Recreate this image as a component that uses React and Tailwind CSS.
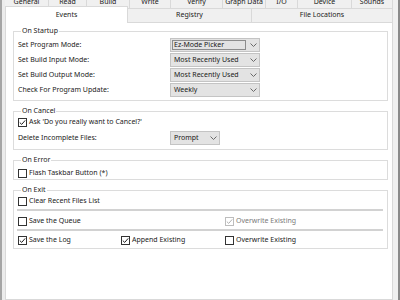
import React from "react";

const topTabs = [
  { label: "General", w: "w-[44px]" },
  { label: "Read", w: "w-[38px]" },
  { label: "Build", w: "w-[43px]" },
  { label: "Write", w: "w-[41px]" },
  { label: "Verify", w: "w-[52px]" },
  { label: "Graph Data", w: "w-[43px]" },
  { label: "I/O", w: "w-[32px]" },
  { label: "Device", w: "w-[54px]" },
  { label: "Sounds", w: "w-[41px]" },
];

function Chevron() {
  return (
    <svg width="7" height="4" viewBox="0 0 7 4">
      <path d="M0.5 0.5 L3.5 3.5 L6.5 0.5" fill="none" stroke="#6a6a6a" strokeWidth="1" />
    </svg>
  );
}

function Combo({ value, width, focused }) {
  return (
    <div className={`flex h-[14px] items-center border border-[#c4c4c4] bg-[#e3e3e3] ${width}`}>
      <div className="flex h-full min-w-0 flex-1 items-center p-[1px]">
        {focused ? (
          <div className="flex h-full flex-1 items-center border border-[#8c8c8c] pl-[1px]">{value}</div>
        ) : (
          <div className="pl-[2px]">{value}</div>
        )}
      </div>
      <div className="flex w-[12px] justify-center">
        <Chevron />
      </div>
    </div>
  );
}

function Check({ checked, label, disabled }) {
  return (
    <div className={`flex h-[12px] items-center gap-[2px] ${disabled ? "text-[#7a7a7a]" : ""}`}>
      <span
        className={`flex h-[9px] w-[9px] items-center justify-center border bg-white ${
          disabled ? "border-[#bdbdbd]" : "border-[#333333]"
        }`}
      >
        {checked && (
          <svg width="7" height="7" viewBox="0 0 7 7">
            <path
              d="M0.8 3.6 L2.7 5.4 L6.2 1.4"
              fill="none"
              stroke={disabled ? "#b0b0b0" : "#222222"}
              strokeWidth="1"
            />
          </svg>
        )}
      </span>
      <span>{label}</span>
    </div>
  );
}

function Group({ title, className, children }) {
  return (
    <fieldset className={`ml-[7px] mr-[4px] border border-[#dcdcdc] pl-[4px] ${className}`}>
      <legend className="ml-[3px] px-[1px] leading-[10px]">{title}</legend>
      {children}
    </fieldset>
  );
}

function Separator() {
  return <div className="mr-[4px] ml-[-1px] h-[2px] bg-[#d2d2d2]" />;
}

export default function App() {
  return (
    <div className="flex h-[300px] w-[400px] overflow-hidden bg-[#f0f0f0] font-['Noto_Sans','Liberation_Sans',sans-serif] text-[7px] text-[#1a1a1a]">
      {/* left frame */}
      <div className="w-[5px] border-l-[2px] border-[#a5a5a5] bg-[#ececec]" />

      <div className="flex w-[388px] flex-col">
        {/* tab row 1 (cut off at the top) */}
        <div className="flex h-[8px] overflow-hidden">
          {topTabs.map((t) => (
            <div
              key={t.label}
              className={`flex items-end justify-center whitespace-nowrap border-r border-[#d9d9d9] leading-[12px] ${t.w}`}
            >
              {t.label}
            </div>
          ))}
        </div>

        {/* tab row 2 */}
        <div className="flex h-[14px]">
          <div className="relative z-10 mt-[-2px] mb-[-1px] flex w-[123px] items-center justify-center border-x border-t border-[#d9d9d9] bg-white pt-[1px]">
            Events
          </div>
          <div className="flex w-[124px] items-center justify-center border-t border-r border-[#d9d9d9] bg-[#f0f0f0]">
            Registry
          </div>
          <div className="flex w-[141px] items-center justify-center border-t border-r border-[#d9d9d9] bg-[#f0f0f0]">
            File Locations
          </div>
        </div>

        {/* page */}
        <div className="flex-1 border border-[#d9d9d9] bg-white pt-[3px]">
          <Group title="On Startup" className="pt-[2px] pb-[3px]">
            <div className="grid grid-cols-[152px_90px] items-center gap-y-[1px]">
              <div>Set Program Mode:</div>
              <Combo value="Ez-Mode Picker" width="w-[90px]" focused />
              <div>Set Build Input Mode:</div>
              <Combo value="Most Recently Used" width="w-[90px]" />
              <div>Set Build Output Mode:</div>
              <Combo value="Most Recently Used" width="w-[90px]" />
              <div>Check For Program Update:</div>
              <Combo value="Weekly" width="w-[90px]" />
            </div>
          </Group>

          <Group title="On Cancel" className="mt-[5px] pb-[4px]">
            <Check checked label="Ask 'Do you really want to Cancel?'" />
            <div className="mt-[3px] grid grid-cols-[152px_50px] items-center">
              <div>Delete Incomplete Files:</div>
              <Combo value="Prompt" width="w-[50px]" />
            </div>
          </Group>

          <Group title="On Error" className="mt-[5px] pt-[2px]">
            <Check label="Flash Taskbar Button (*)" />
          </Group>

          <Group title="On Exit" className="mt-[5px] pb-[2px]">
            <Check label="Clear Recent Files List" />
            <div className="mt-[2px]">
              <Separator />
            </div>
            <div className="mt-[4px] grid grid-cols-[207px_1fr]">
              <Check label="Save the Queue" />
              <Check checked disabled label="Overwrite Existing" />
            </div>
            <div className="mt-[2px]">
              <Separator />
            </div>
            <div className="mt-[3px] grid grid-cols-[103px_104px_1fr]">
              <Check checked label="Save the Log" />
              <Check checked label="Append Existing" />
              <Check label="Overwrite Existing" />
            </div>
          </Group>
        </div>
      </div>

      {/* right frame */}
      <div className="w-[5px] bg-[#f0f0f0]" />
      <div className="w-[2px] bg-[#8a8a8a]" />
    </div>
  );
}
